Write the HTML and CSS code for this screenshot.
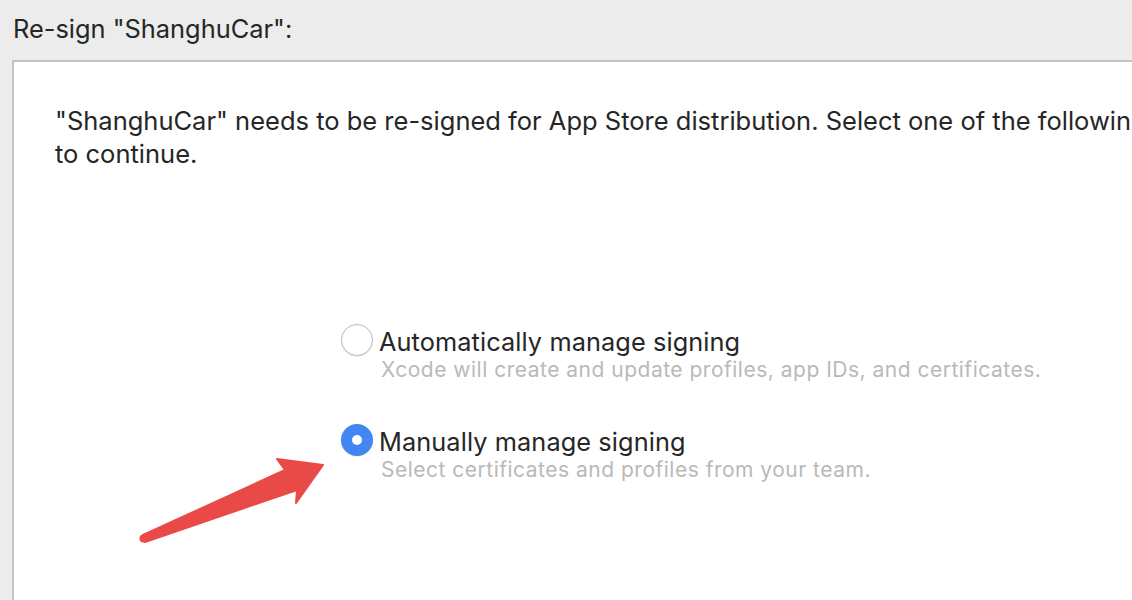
FILE: index.html
```html
<!DOCTYPE html>
<html>
<head>
<meta charset="utf-8">
<link rel="stylesheet" href="styles.css">
</head>
<body>
<div class="page">
  <div class="title">Re-sign "ShanghuCar":</div>
  <div class="box">
    <p class="intro">"ShanghuCar" needs to be re-signed for App Store distribution. Select one of the following options<br>to continue.</p>
    <div class="options">
      <div class="option">
        <span class="radio"></span>
        <div class="labels">
          <div class="label">Automatically manage signing</div>
          <div class="sub">Xcode will create and update profiles, app IDs, and certificates.</div>
        </div>
      </div>
      <div class="option">
        <span class="radio checked"></span>
        <div class="labels">
          <div class="label">Manually manage signing</div>
          <div class="sub">Select certificates and profiles from your team.</div>
        </div>
      </div>
    </div>
  </div>
  <svg class="arrow" width="1132" height="600" viewBox="0 0 1132 600">
    <polygon points="143,535 285,470 277,459 323,465 296,503 297,490 145,542" fill="#e94a47" stroke="#e94a47" stroke-width="2" stroke-linejoin="round"/>
    <circle cx="143.5" cy="538.5" r="4" fill="#e94a47"/>
  </svg>
</div>
</body>
</html>
```
FILE: styles.css
```css
html, body {
  margin: 0;
  padding: 0;
  background: #ececec;
  overflow: hidden;
  width: 1132px;
  height: 600px;
}
.page {
  position: relative;
  width: 1132px;
  height: 600px;
  overflow: hidden;
  font-family: Inter, "Noto Sans", sans-serif;
  color: #262626;
}
.title {
  font-size: 25.4px;
  line-height: 28px;
  padding: 15px 0 0 13px;
  box-sizing: border-box;
  height: 60px;
  white-space: nowrap;
}
.box {
  margin-left: 12px;
  width: 1400px;
  height: 700px;
  background: #fff;
  border: 2px solid #c3c3c3;
  box-sizing: border-box;
  padding: 42px 0 0 41px;
}
.intro {
  margin: 0;
  font-size: 25.5px;
  line-height: 33px;
  white-space: nowrap;
}
.options {
  margin: 157px 0 0 286px;
  display: flex;
  flex-direction: column;
  gap: 44px;
}
.option {
  display: flex;
  align-items: flex-start;
  gap: 6px;
}
.radio {
  width: 32px;
  height: 32px;
  border-radius: 50%;
  box-sizing: border-box;
  border: 1.5px solid #bdbdbd;
  background: #fff;
  flex: none;
  margin-top: -3px;
  box-shadow: 0 0.5px 1px rgba(0,0,0,0.15);
}
.radio.checked {
  border: none;
  background: #4286f4;
  display: flex;
  align-items: center;
  justify-content: center;
}
.radio.checked::after {
  content: "";
  width: 10px;
  height: 10px;
  border-radius: 50%;
  background: #fff;
}
.label {
  font-size: 25.3px;
  line-height: 30px;
  letter-spacing: 0.1px;
}
.sub {
  font-size: 21px;
  line-height: 26px;
  letter-spacing: 0.5px;
  color: #b9b9b9;
  margin-left: 2px;
}
.arrow {
  position: absolute;
  left: 0;
  top: 0;
  pointer-events: none;
}
```
